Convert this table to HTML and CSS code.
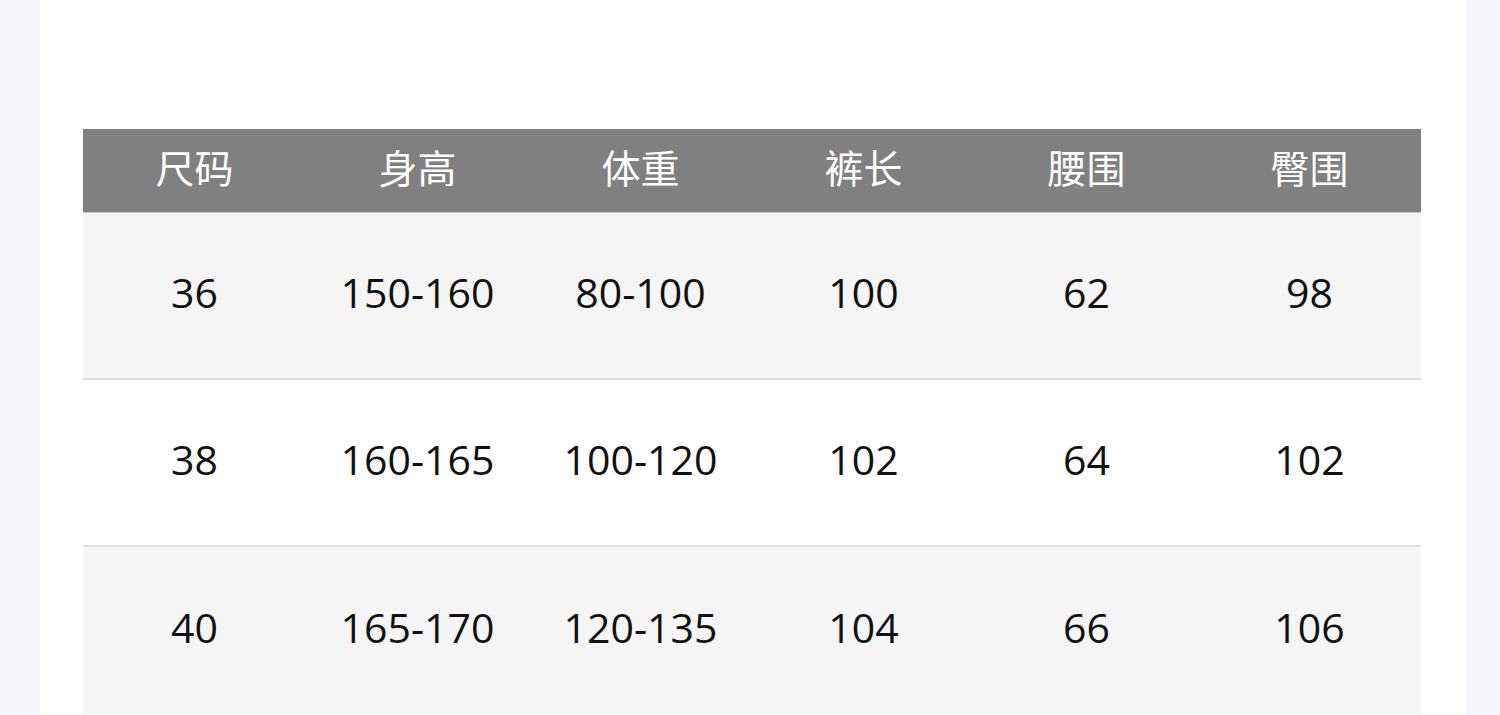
FILE: index.html
```html
<!DOCTYPE html>
<html lang="zh-CN">
<head>
<meta charset="utf-8">
<title>尺码表</title>
<link rel="stylesheet" href="styles.css">
</head>
<body>
<div class="page">
  <div class="sheet">
    <div class="size-table">
      <div class="row head">
        <div class="cell">尺码</div><div class="cell">身高</div><div class="cell">体重</div><div class="cell">裤长</div><div class="cell">腰围</div><div class="cell">臀围</div>
      </div>
      <div class="row odd">
        <div class="cell">36</div><div class="cell">150-160</div><div class="cell">80-100</div><div class="cell">100</div><div class="cell">62</div><div class="cell">98</div>
      </div>
      <div class="row even">
        <div class="cell">38</div><div class="cell">160-165</div><div class="cell">100-120</div><div class="cell">102</div><div class="cell">64</div><div class="cell">102</div>
      </div>
      <div class="row odd last">
        <div class="cell">40</div><div class="cell">165-170</div><div class="cell">120-135</div><div class="cell">104</div><div class="cell">66</div><div class="cell">106</div>
      </div>
    </div>
  </div>
</div>
</body>
</html>
```
FILE: styles.css
```css
html, body {
  margin: 0;
  padding: 0;
  background: #f5f5f9;
  height: 100%;
  overflow: hidden;
}
.page {
  padding-left: 40px;
  height: 100%;
}
.sheet {
  width: 1426px;
  height: 100%;
  background: #ffffff;
  box-sizing: border-box;
  padding: 129px 45px 0 43px;
}
.size-table {
  width: 1338px;
  display: flex;
  flex-direction: column;
  font-family: "Open Sans", "Noto Sans CJK SC", sans-serif;
}
.row {
  display: grid;
  grid-template-columns: repeat(6, 1fr);
  align-items: center;
  box-sizing: border-box;
}
.cell {
  text-align: center;
  white-space: nowrap;
}
.row.head {
  height: 84px;
  padding-bottom: 8px;
  background: #808080;
  color: #ffffff;
  font-family: "Noto Sans CJK SC", sans-serif;
  font-size: 39px;
  line-height: 1.2;
  border-bottom: 1px solid #c4c4c4;
}
.row.odd,
.row.even {
  height: 167px;
  padding-bottom: 6px;
  font-size: 41px;
  line-height: 1.2;
  color: #111111;
  border-bottom: 2px solid #dedede;
}
.row.odd {
  background: #f5f5f5;
}
.row.even {
  background: #ffffff;
}
.row.last {
  border-bottom: none;
}
```
